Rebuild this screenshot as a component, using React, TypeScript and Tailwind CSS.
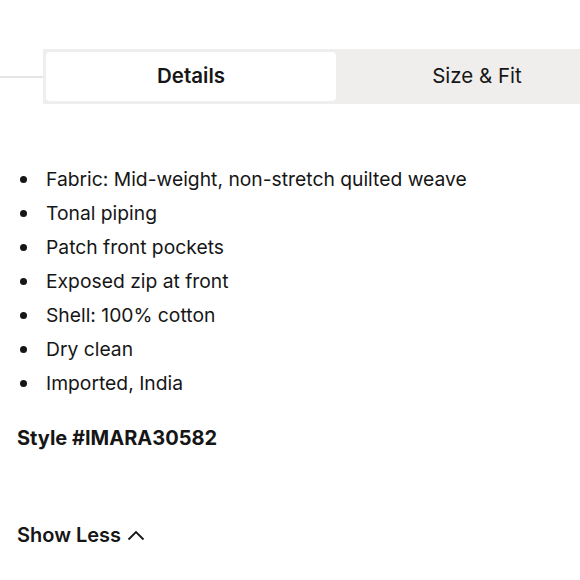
export default function App() {
  const items = [
    "Fabric: Mid-weight, non-stretch quilted weave",
    "Tonal piping",
    "Patch front pockets",
    "Exposed zip at front",
    "Shell: 100% cotton",
    "Dry clean",
    "Imported, India",
  ]
  return (
    <div className="w-[580px] h-[580px] bg-white overflow-hidden text-[#161616]" style={{ fontFamily: "Inter, 'Liberation Sans', sans-serif" }}>
      <div className="flex items-center pt-[49px]">
        <div className="shrink-0 w-[43px] h-[2px] bg-[#e6e5e3]" />
        <div className="flex shrink-0 w-[586px] h-[55px] bg-[#efeeec] p-[3px]">
          <div className="w-[290px] flex items-center justify-center bg-white rounded-[4px] text-[20.5px] font-semibold">Details</div>
          <div className="w-[282px] flex items-center justify-center text-[20.5px]">Size &amp; Fit</div>
        </div>
      </div>
      <ul className="mt-[58px] pl-[20px]">
        {items.map((t) => (
          <li key={t} className="flex items-center h-[34px] text-[19.3px]">
            <span className="w-[7px] h-[7px] rounded-full bg-[#161616] mr-[19px]" />
            {t}
          </li>
        ))}
      </ul>
      <div className="mt-[23px] pl-[17px] text-[20px] font-bold">Style #IMARA30582</div>
      <div className="mt-[67px] pl-[17px] flex items-center text-[20px] font-semibold">
        Show Less
        <svg className="ml-[6px]" width="18" height="12" viewBox="0 0 18 12" fill="none" stroke="#161616" strokeWidth="1.8">
          <path d="M1.5 10.5 L9 3 L16.5 10.5" />
        </svg>
      </div>
    </div>
  )
}
